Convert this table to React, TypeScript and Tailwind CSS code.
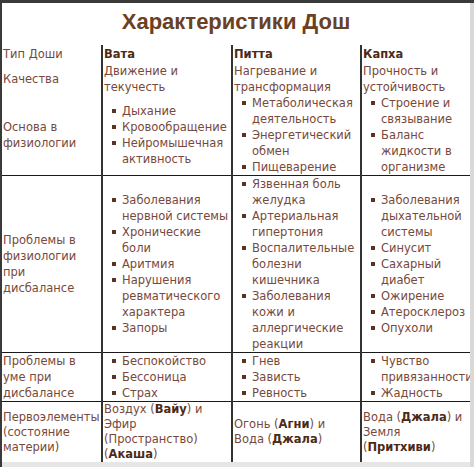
import React from 'react';

const font = { fontFamily: '"DejaVu Sans", Verdana, sans-serif' };

type Item = string[];

function Lines({ lines }: { lines: string[] }) {
  return (
    <>
      {lines.map((l, i) => (
        <div key={i} className="whitespace-nowrap">
          {l}
        </div>
      ))}
    </>
  );
}

function Items({ items }: { items: Item[] }) {
  return (
    <ul className="m-0 p-0 list-none">
      {items.map((t) => (
        <li key={t.join(' ')} className="flex">
          <span className="w-[18px] shrink-0 pl-[8px] pt-[6px]">
            <span className="block w-[4px] h-[4px] bg-[#5a3324]" />
          </span>
          <div>
            <Lines lines={t} />
          </div>
        </li>
      ))}
    </ul>
  );
}

const first = 'align-middle pl-[1px] pr-0 py-0';
const cell = 'align-middle pl-[1px] pr-0 py-0 border-l-2 border-[#333]';
const hline = 'border-t border-[#1a1a1a]';
const bold = 'font-bold text-[#4d2a17]';

export default function App() {
  return (
    <div className="w-[474px] h-[467px] bg-white overflow-hidden border-t-[3px] border-l-2 border-[#3a3a3a] flex">
      <div className="w-[468px] flex flex-col text-[11.5px] leading-[16px] text-[#77493b]" style={font}>
        <h1
          className="h-[42px] m-0 text-center text-[22px] leading-[38px] font-bold text-[#6b4023]"
          style={{ fontFamily: '"Liberation Sans", Arial, sans-serif' }}
        >
          Характеристики Дош
        </h1>
        <table className="border-collapse table-fixed w-[468px]">
          <colgroup>
            <col className="w-[100px]" />
            <col className="w-[130px]" />
            <col className="w-[129px]" />
            <col className="w-[109px]" />
          </colgroup>
          <tbody>
            <tr className="h-[17px]">
              <td className={first}>Тип Доши</td>
              <td className={`${cell} ${bold}`}>Вата</td>
              <td className={`${cell} ${bold}`}>Питта</td>
              <td className={`${cell} ${bold}`}>Капха</td>
            </tr>
            <tr className="h-[33px]">
              <td className={first}>Качества</td>
              <td className={cell}>
                <Lines lines={['Движение и', 'текучесть']} />
              </td>
              <td className={cell}>
                <Lines lines={['Нагревание и', 'трансформация']} />
              </td>
              <td className={cell}>
                <Lines lines={['Прочность и', 'устойчивость']} />
              </td>
            </tr>
            <tr className="h-[80px]">
              <td className={first}>
                <Lines lines={['Основа в', 'физиологии']} />
              </td>
              <td className={cell}>
                <Items items={[['Дыхание'], ['Кровообращение'], ['Нейромышечная', 'активность']]} />
              </td>
              <td className={cell}>
                <Items
                  items={[['Метаболическая', 'деятельность'], ['Энергетический', 'обмен'], ['Пищеварение']]}
                />
              </td>
              <td className={cell}>
                <Items items={[['Строение и', 'связывание'], ['Баланс', 'жидкости в', 'организме']]} />
              </td>
            </tr>
            <tr className={hline}>
              <td className={first}>
                <Lines lines={['Проблемы в', 'физиологии', 'при', 'дисбалансе']} />
              </td>
              <td className={cell}>
                <Items
                  items={[
                    ['Заболевания', 'нервной системы'],
                    ['Хронические', 'боли'],
                    ['Аритмия'],
                    ['Нарушения', 'ревматического', 'характера'],
                    ['Запоры'],
                  ]}
                />
              </td>
              <td className={cell}>
                <Items
                  items={[
                    ['Язвенная боль', 'желудка'],
                    ['Артериальная', 'гипертония'],
                    ['Воспалительные', 'болезни', 'кишечника'],
                    ['Заболевания', 'кожи и', 'аллергические', 'реакции'],
                  ]}
                />
              </td>
              <td className={cell}>
                <Items
                  items={[
                    ['Заболевания', 'дыхательной', 'системы'],
                    ['Синусит'],
                    ['Сахарный', 'диабет'],
                    ['Ожирение'],
                    ['Атеросклероз'],
                    ['Опухоли'],
                  ]}
                />
              </td>
            </tr>
            <tr className={hline}>
              <td className={first}>
                <Lines lines={['Проблемы в', 'уме при', 'дисбалансе']} />
              </td>
              <td className={cell}>
                <Items items={[['Беспокойство'], ['Бессоница'], ['Страх']]} />
              </td>
              <td className={cell}>
                <Items items={[['Гнев'], ['Зависть'], ['Ревность']]} />
              </td>
              <td className={cell}>
                <Items items={[['Чувство', 'привязанности'], ['Жадность']]} />
              </td>
            </tr>
            <tr className={`${hline} leading-[15px]`}>
              <td className={first}>
                <Lines lines={['Первоэлементы', '(состояние', 'материи)']} />
              </td>
              <td className={cell}>
                <div className="whitespace-nowrap">
                  Воздух (<b className={bold}>Вайу</b>) и
                </div>
                <div>Эфир</div>
                <div>(Пространство)</div>
                <div>
                  (<b className={bold}>Акаша</b>)
                </div>
              </td>
              <td className={cell}>
                <div className="whitespace-nowrap">
                  Огонь (<b className={bold}>Агни</b>) и
                </div>
                <div className="whitespace-nowrap">
                  Вода (<b className={bold}>Джала</b>)
                </div>
              </td>
              <td className={cell}>
                <div className="whitespace-nowrap">
                  Вода (<b className={bold}>Джала</b>) и
                </div>
                <div>Земля</div>
                <div>
                  (<b className={bold}>Притхиви</b>)
                </div>
              </td>
            </tr>
          </tbody>
        </table>
        <div className="flex-1 bg-[#e6e6e6]" />
      </div>
      <div className="w-[4px] bg-[#d9d9d9]" />
    </div>
  );
}
